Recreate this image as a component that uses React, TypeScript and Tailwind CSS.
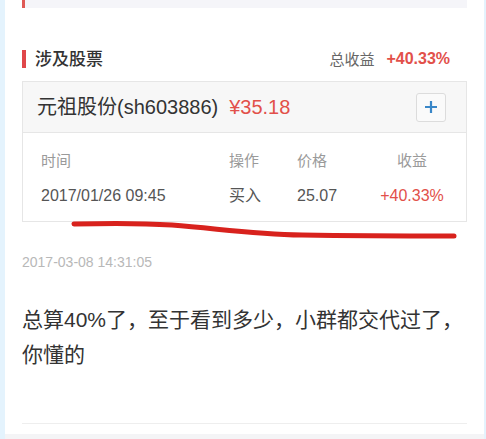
const font = { fontFamily: '"Liberation Sans", "Noto Sans CJK SC", sans-serif' }

type Trade = { time: string; action: string; price: string; gain: string }

const trades: Trade[] = [{ time: '2017/01/26 09:45', action: '买入', price: '25.07', gain: '+40.33%' }]

function PlusIcon() {
  return (
    <svg width="14" height="14" viewBox="0 0 14 14" fill="none">
      <path d="M7 1v12M1 7h12" stroke="#3a87c8" strokeWidth="2.2" />
    </svg>
  )
}

function StockCard() {
  return (
    <div className="relative">
      <div className="border border-[#e6e6e6]">
        <div className="h-[51px] bg-[#f7f7f7] border-b border-[#e6e6e6] flex items-center pl-[14px] pr-[20px]">
          <span className="text-[20px] leading-none text-[#333]">元祖股份(sh603886)</span>
          <span className="ml-[11px] text-[20px] leading-none text-[#e2504a]">¥35.18</span>
          <button className="ml-auto w-[30px] h-[29px] border border-[#dcdcdc] rounded-[3px] bg-[#fafafa] flex items-center justify-center">
            <PlusIcon />
          </button>
        </div>
        <div className="pt-[18px] pb-[15px] pl-[18px]">
          <div className="grid grid-cols-[188px_68px_82px_66px] text-[15px] leading-[20px] text-[#9a9a9a]">
            <span>时间</span>
            <span>操作</span>
            <span>价格</span>
            <span className="text-center">收益</span>
          </div>
          {trades.map((t) => (
            <div
              key={t.time}
              className="mt-[15px] grid grid-cols-[188px_68px_82px_66px] text-[16px] leading-[20px] text-[#555]"
            >
              <span>{t.time}</span>
              <span>{t.action}</span>
              <span>{t.price}</span>
              <span className="text-center text-[#e2504a]">{t.gain}</span>
            </div>
          ))}
        </div>
      </div>
      {/* hand-drawn underline */}
      <svg className="absolute left-0 top-[138px] pointer-events-none" width="445" height="20" viewBox="0 0 445 20">
        <path
          d="M52 5 C 90 4, 120 4, 150 6 C 200 10, 230 15, 280 16 C 340 17, 400 17, 432 17"
          stroke="#d8221d"
          strokeWidth="5"
          strokeLinecap="round"
          fill="none"
        />
      </svg>
    </div>
  )
}

export default function App() {
  return (
    <div className="flex min-h-[439px] bg-[#e4f3fd] pl-[5px] pr-[2px]" style={font}>
      <div className="flex-1 bg-white flex flex-col">
        <div className="px-[17px]">
          <div className="h-[8px] bg-[#f5f5f9] flex">
            <div className="w-[3px] bg-[#df5a56]" />
          </div>

          <div className="mt-[42px] h-[18px] flex items-center">
            <div className="w-[4px] h-[18px] bg-[#e0474a]" />
            <span className="ml-[9px] text-[17px] leading-none font-medium text-[#333]">涉及股票</span>
            <span className="ml-auto text-[15px] leading-none text-[#666]">总收益</span>
            <span className="ml-[12px] mr-[17px] text-[16px] leading-none font-bold text-[#e2504a]">+40.33%</span>
          </div>

          <div className="mt-[13px]">
            <StockCard />
          </div>

          <div className="mt-[30px] text-[14px] leading-[20px] text-[#b8b8b8]">2017-03-08 14:31:05</div>

          <p className="mt-[30px] text-[21px] leading-[35px] text-[#333]">
            总算40%了，至于看到多少，小群都交代过了，你懂的
          </p>

          <div className="mt-[51px] h-px bg-[#eeeeee]" />
        </div>
        <div className="mt-[10px] flex-1 bg-[#f4f4f6]" />
      </div>
    </div>
  )
}
